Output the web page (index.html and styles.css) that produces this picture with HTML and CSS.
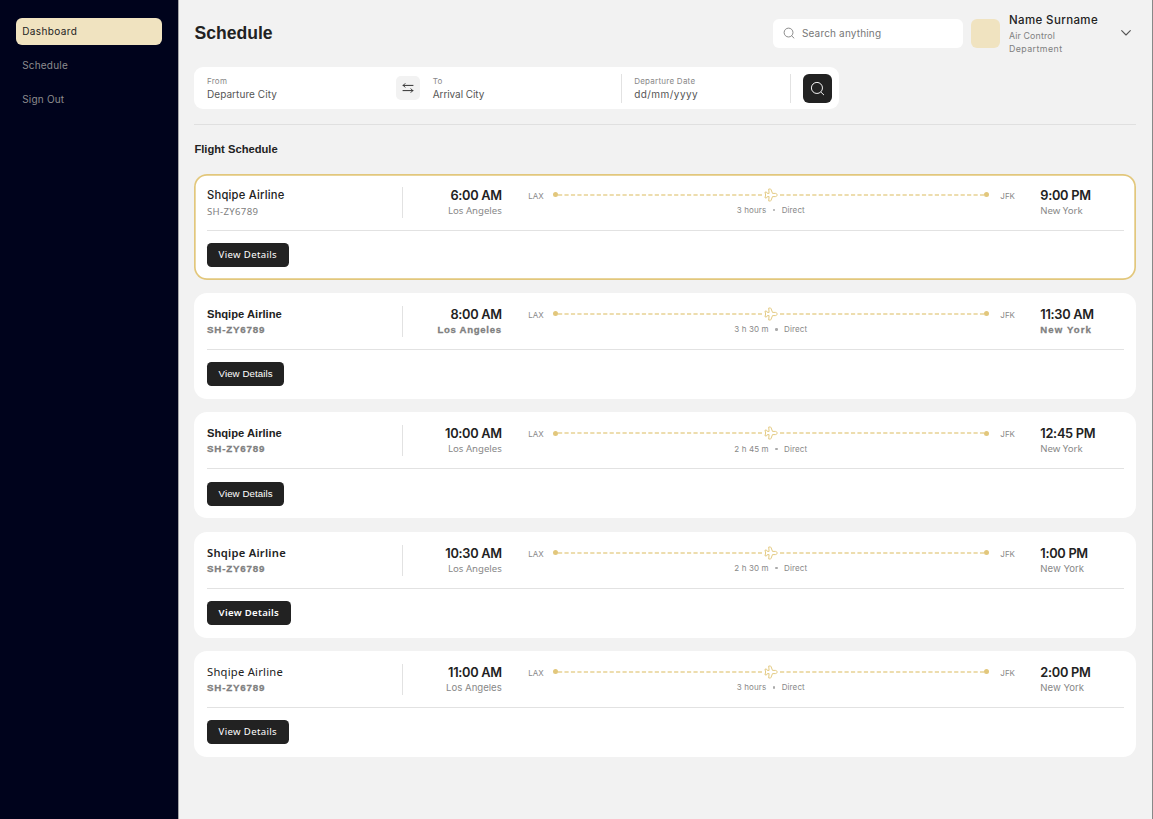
FILE: index.html
```html
<!DOCTYPE html>
<html lang="en">
<head>
<meta charset="utf-8">
<title>Schedule</title>
<link rel="stylesheet" href="styles.css">
</head>
<body>
<svg class="defs" aria-hidden="true">
  <symbol id="plane" viewBox="0 0 14 14">
    <path d="M4.700 1h1.600q.5 0 .7.5l1.500 3.900h2.900c1.100 0 1.700.8 1.700 1.600s-.6 1.600-1.700 1.600H8.500l-1.500 3.900q-.2.5-.7.5H4.700l.4-4.400H3.300l-.7 1.300H1L1.600 7 1 4.100h1.600l.7 1.300h1.800z" fill="none" stroke="#e2c77c" stroke-width=".95" stroke-linejoin="round"/>
  </symbol>
  <symbol id="dash" viewBox="0 0 204 2">
    <path d="M0 1H204" fill="none" stroke="#e8d294" stroke-width="1.3" stroke-dasharray="4.2 2.250"/>
  </symbol>
  <symbol id="search" viewBox="0 0 16 16">
    <circle cx="7.4" cy="7.4" r="5.9" fill="none" stroke="currentColor"/>
    <path d="M12 12.2l2.6 2.5" fill="none" stroke="currentColor" stroke-linecap="round"/>
  </symbol>
</svg>
<div class="app">
  <nav class="sidebar">
    <a class="nav-item active"><span class="n1">Dashboard</span></a>
    <a class="nav-item"><span class="n2">Schedule</span></a>
    <a class="nav-item"><span class="n3">Sign Out</span></a>
  </nav>
  <main class="main">
    <header class="header">
      <h1>Schedule</h1>
      <div class="search"><svg><use href="#search"/></svg><span>Search anything</span></div>
      <div class="avatar"></div>
      <div class="user"><div class="user-name">Name Surname</div><div class="user-role">Air Control<br><span>Department</span></div></div>
      <svg class="chevron" viewBox="0 0 10 6"><path d="M.7.7L5 5 9.3.7" fill="none" stroke="#555" stroke-width="1.1" stroke-linecap="round" stroke-linejoin="round"/></svg>
    </header>
    <section class="filter">
      <div class="field from"><label>From</label><span>Departure City</span></div>
      <div class="swap"><svg viewBox="0 0 12 12"><path d="M11 3.4H1.2M3 1.6L1.2 3.4 3 5.2M1 8.6h9.8M9 6.8l1.8 1.8L9 10.4" fill="none" stroke="#333" stroke-width="1" stroke-linecap="round" stroke-linejoin="round"/></svg></div>
      <div class="field to"><label>To</label><span>Arrival City</span></div>
      <div class="field date"><label>Departure Date</label><span>dd/mm/yyyy</span></div>
      <div class="go"><svg><use href="#search"/></svg></div>
    </section>
    <h2>Flight Schedule</h2>
    <div class="cards">
      <article class="card selected">
        <div class="top">
          <div class="airline"><div class="name geo">Shqipe Airline</div><div class="code light">SH-ZY6789</div></div>
          <div class="stop dep"><div class="time">6:00 AM</div><div class="city hum">Los Angeles</div></div>
          <div class="route"><span class="air">LAX</span><div class="track"><div class="line"><i></i><svg class="dash"><use href="#dash"/></svg><svg class="plane"><use href="#plane"/></svg><svg class="dash"><use href="#dash"/></svg><i></i></div><div class="meta"><span>3 hours</span><em></em><span>Direct</span></div></div><span class="air">JFK</span></div>
          <div class="stop"><div class="time">9:00 PM</div><div class="city hum">New York</div></div>
        </div>
        <button class="hum">View Details</button>
      </article>
      <article class="card">
        <div class="top">
          <div class="airline"><div class="name">Shqipe Airline</div><div class="code">SH-ZY6789</div></div>
          <div class="stop dep"><div class="time">8:00 AM</div><div class="city heavy">Los Angeles</div></div>
          <div class="route"><span class="air">LAX</span><div class="track"><div class="line"><i></i><svg class="dash"><use href="#dash"/></svg><svg class="plane"><use href="#plane"/></svg><svg class="dash"><use href="#dash"/></svg><i></i></div><div class="meta"><span>3 h 30 m</span><em></em><span>Direct</span></div></div><span class="air">JFK</span></div>
          <div class="stop"><div class="time">11:30 AM</div><div class="city heavy">New York</div></div>
        </div>
        <button>View Details</button>
      </article>
      <article class="card">
        <div class="top">
          <div class="airline"><div class="name">Shqipe Airline</div><div class="code">SH-ZY6789</div></div>
          <div class="stop dep"><div class="time">10:00 AM</div><div class="city hum">Los Angeles</div></div>
          <div class="route"><span class="air">LAX</span><div class="track"><div class="line"><i></i><svg class="dash"><use href="#dash"/></svg><svg class="plane"><use href="#plane"/></svg><svg class="dash"><use href="#dash"/></svg><i></i></div><div class="meta"><span>2 h 45 m</span><em></em><span>Direct</span></div></div><span class="air">JFK</span></div>
          <div class="stop"><div class="time">12:45 PM</div><div class="city hum">New York</div></div>
        </div>
        <button>View Details</button>
      </article>
      <article class="card">
        <div class="top">
          <div class="airline"><div class="name humb">Shqipe Airline</div><div class="code">SH-ZY6789</div></div>
          <div class="stop dep"><div class="time">10:30 AM</div><div class="city hum">Los Angeles</div></div>
          <div class="route"><span class="air">LAX</span><div class="track"><div class="line"><i></i><svg class="dash"><use href="#dash"/></svg><svg class="plane"><use href="#plane"/></svg><svg class="dash"><use href="#dash"/></svg><i></i></div><div class="meta"><span>2 h 30 m</span><em></em><span>Direct</span></div></div><span class="air">JFK</span></div>
          <div class="stop"><div class="time">1:00 PM</div><div class="city">New York</div></div>
        </div>
        <button class="humb">View Details</button>
      </article>
      <article class="card">
        <div class="top">
          <div class="airline"><div class="name hum">Shqipe Airline</div><div class="code">SH-ZY6789</div></div>
          <div class="stop dep"><div class="time">11:00 AM</div><div class="city">Los Angeles</div></div>
          <div class="route"><span class="air">LAX</span><div class="track"><div class="line"><i></i><svg class="dash"><use href="#dash"/></svg><svg class="plane"><use href="#plane"/></svg><svg class="dash"><use href="#dash"/></svg><i></i></div><div class="meta"><span>3 hours</span><em></em><span>Direct</span></div></div><span class="air">JFK</span></div>
          <div class="stop"><div class="time">2:00 PM</div><div class="city">New York</div></div>
        </div>
        <button class="hum">View Details</button>
      </article>
    </div>
  </main>
</div>
</body>
</html>
```
FILE: styles.css
```css
* { box-sizing: border-box; }
body { margin: 0; font-family: Inter, "Liberation Sans", sans-serif; color: #222; background: #f2f2f2; }
.defs { display: block; width: 0; height: 0; }
.app { display: flex; height: 819px; overflow: hidden; border-right: 1px solid #888; }

.sidebar { width: 179px; flex: none; background: #00031c; border-right: 1px solid #a5a5a8; padding: 18px 16px; display: flex; flex-direction: column; gap: 7px; }
.nav-item { height: 26.7px; display: flex; align-items: center; padding-left: 6.2px; border-radius: 6px; font-size: 10px; color: #8c8c8e; white-space: nowrap; }
.nav-item.active { background: #f0e3c0; color: #222; }
.n1 { letter-spacing: .38px; }
.n2, .n3 { letter-spacing: .2px; }

.main { flex: 1; padding: 0 15.6px 0 15.4px; }
.header { height: 67.4px; padding-bottom: 1px; display: flex; align-items: center; }
h1 { margin: 0; flex: 1; font: bold 17.6px/24px "Liberation Sans", Arial, sans-serif; }
.search { width: 190px; height: 29px; margin-right: 8px; padding-left: 10px; background: #fff; border-radius: 6px; display: flex; align-items: center; gap: 7px; font-size: 10px; color: #777; letter-spacing: .17px; }
.search svg { width: 12px; height: 12px; color: #666; }
.avatar { width: 29px; height: 29px; border-radius: 6px; background: #f0e3c0; margin-right: 9px; }
.user { width: 112.5px; padding-top: 1.6px; }
.user-name { font-size: 11.5px; font-weight: 500; line-height: 16px; white-space: nowrap; letter-spacing: .38px; }
.user-role { font-size: 8.8px; line-height: 12.8px; color: #808080; margin-top: 2px; letter-spacing: .15px; }
.user-role span { letter-spacing: .45px; }
.chevron { width: 10px; height: 6px; margin-right: 5px; }

.filter { width: 645px; height: 41.4px; background: #fff; border-radius: 9px; display: flex; align-items: center; padding-left: 12.6px; }
.field { display: flex; flex-direction: column; height: 29px; white-space: nowrap; }
.field label { font-size: 8px; line-height: 12px; padding-top: 1px; color: #888; letter-spacing: .25px; }
.field span { font-size: 10px; line-height: 14px; color: #555; letter-spacing: .06px; }
.from { width: 189px; }
.swap { width: 24px; height: 24px; border-radius: 5px; background: #f2f2f2; display: flex; align-items: center; justify-content: center; margin-right: 12.8px; }
.swap svg { width: 12px; height: 12px; }
.to { width: 189px; border-right: 1px solid #e2e2e2; }
.date { width: 169px; padding-left: 12.4px; border-right: 1px solid #e2e2e2; }
.to span { letter-spacing: -.08px; }
.date span { letter-spacing: .45px; }
.go { width: 29px; height: 29px; margin-left: 12.2px; border-radius: 6px; background: #222; color: #fff; display: flex; align-items: center; justify-content: center; }
.go svg { width: 15px; height: 15px; }

h2 { margin: 15.4px 0 0; padding-top: 15.2px; height: 49.4px; border-top: 1px solid #e0e0e0; font: bold 11.2px/18px "Liberation Sans", Arial, sans-serif; }
.cards { display: flex; flex-direction: column; gap: 13.15px; }
.card { height: 106.2px; border-radius: 13px; background: #fff; padding: 13.1px 12.6px 12px; }
.card.selected { box-shadow: inset 0 0 0 1.7px #e2c77c; }
.top { display: grid; grid-template-columns: 195.8px 99px 1fr 83.5px; height: 44.1px; border-bottom: 1px solid #e2e2e2; white-space: nowrap; }
.airline { height: 31px; border-right: 1px solid #e2e2e2; }
.name { font: bold 11.2px/16px "Liberation Sans", Arial, sans-serif; }
.name.geo { font: 500 11.2px/17px Inter, sans-serif; letter-spacing: .22px; }
.name.hum { font: 400 11.2px/16px "Noto Sans", sans-serif; letter-spacing: .25px; }
.name.humb { font: 600 11.2px/16px "Noto Sans", sans-serif; letter-spacing: .25px; }
.code { font: bold 9.8px/16.6px "Liberation Sans", Arial, sans-serif; color: #808080; letter-spacing: .8px; -webkit-text-stroke: .3px #808080; }
.code.light { font: 400 9.6px/15px "Noto Sans", sans-serif; letter-spacing: .33px; -webkit-text-stroke: 0; }
.dep { text-align: right; }
.time { font-size: 12.8px; font-weight: 600; line-height: 18px; letter-spacing: -.3px; }
.city { font-size: 9.6px; line-height: 12px; color: #888; }
.city.hum { font-family: "Noto Sans", sans-serif; }
.city.heavy { font: bold 9.6px/12px "Liberation Sans", Arial, sans-serif; color: #808080; letter-spacing: .7px; -webkit-text-stroke: .3px #808080; }
.stop:last-child .heavy { letter-spacing: 1.1px; }
.route { display: flex; padding: 0 25px 0 26.5px; justify-content: space-between; }
.air { font-size: 8px; line-height: 19px; color: #888; width: 15px; flex: none; }
.track { width: 436px; margin-right: 2px; flex: none; }
.line { height: 15px; margin-top: .5px; display: flex; align-items: center; }
.line i { width: 5px; height: 5px; border-radius: 50%; background: #e2c77c; flex: none; }
.dash { width: 204px; height: 2px; flex: none; }
.plane { width: 14px; height: 14px; margin: 0 1.3px 0 2.7px; flex: none; }
.meta { display: flex; justify-content: center; align-items: center; gap: 6.5px; font-size: 8px; line-height: 16px; color: #888; letter-spacing: .12px; }
.meta em { width: 2.4px; height: 2.4px; border-radius: 50%; background: #aaa; }
button { display: block; height: 24px; margin-top: 12.1px; padding: 0 11.6px; border: 0; border-radius: 4.5px; background: #222; color: #fff; font: 9.7px/24px "Liberation Sans", Arial, sans-serif; letter-spacing: .07px; }
button.hum { font: 400 9.6px/24px "Noto Sans", sans-serif; letter-spacing: .35px; }
button.humb { font: 600 9.6px/24px "Noto Sans", sans-serif; letter-spacing: .3px; }
```
